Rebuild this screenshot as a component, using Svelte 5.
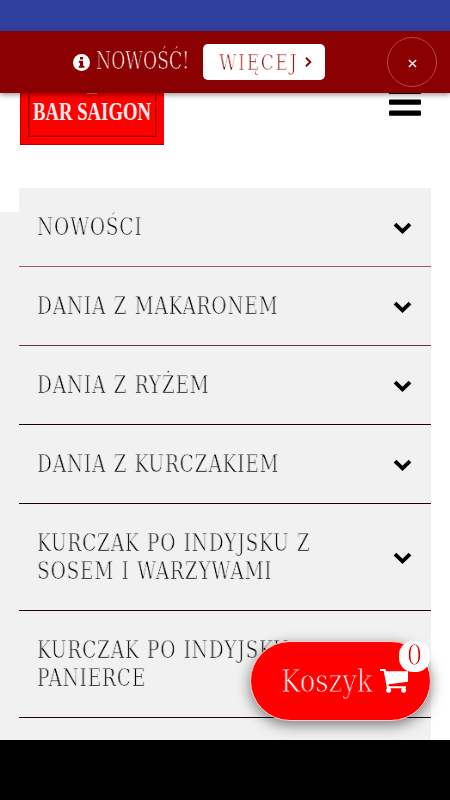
<script lang="ts">
  type Category = { lines: string[]; open: boolean }

  let categories: Category[] = [
    { lines: ['NOWOŚCI'], open: false },
    { lines: ['DANIA Z MAKARONEM'], open: false },
    { lines: ['DANIA Z RYŻEM'], open: false },
    { lines: ['DANIA Z KURCZAKIEM'], open: false },
    { lines: ['KURCZAK PO INDYJSKU Z', 'SOSEM I WARZYWAMI'], open: false },
    { lines: ['KURCZAK PO INDYJSKU', 'PANIERCE'], open: false },
    { lines: [''], open: false },
  ]

  let count = 0
</script>

<style>
  :global(body) {
    margin: 0;
    background: #000;
  }

  .screen {
    width: 450px;
    height: 800px;
    display: flex;
    flex-direction: column;
    overflow: hidden;
    background: #fff;
    font-family: 'DejaVu Serif Condensed', 'DejaVu Serif', serif;
    font-stretch: condensed;
  }

  button {
    margin: 0;
    padding: 0;
    border: 0;
    font: inherit;
    cursor: pointer;
  }

  svg {
    display: block;
    flex: none;
    overflow: visible;
  }

  .status {
    flex: none;
    height: 31px;
    background: #2f3f9e;
  }

  .banner {
    flex: none;
    height: 62px;
    box-sizing: border-box;
    padding: 0 13px 0 73px;
    display: flex;
    align-items: center;
    background: #8b0000;
    color: #fff;
    box-shadow: 0 2px 5px rgba(0, 0, 0, 0.4);
    position: relative;
    z-index: 2;
  }

  /* hairline lettering: a stroke in the background colour eats into the glyphs */
  .thin {
    display: block;
    white-space: nowrap;
    transform-origin: 0 50%;
    will-change: transform;
  }

  .news {
    width: 94px;
    margin: 0 13px 2px 6px;
    font-size: 24px;
    line-height: 30px;
    transform: scaleX(0.8);
    -webkit-text-stroke: 0.7px #8b0000;
  }

  .more {
    width: 122px;
    height: 36px;
    padding: 0 13px 0 16px;
    display: flex;
    align-items: center;
    justify-content: space-between;
    border-radius: 5px;
    background: #fff;
    color: #8b0000;
  }

  .more .thin {
    width: 80px;
    text-align: left;
    font-size: 22px;
    letter-spacing: 2px;
    transform: scaleX(0.86);
    -webkit-text-stroke: 0.7px #fff;
  }

  .close {
    width: 50px;
    height: 50px;
    margin-left: auto;
    box-sizing: border-box;
    display: flex;
    align-items: center;
    justify-content: center;
    border: 1px solid #b64848;
    border-radius: 50%;
    background: none;
  }

  .close svg {
    margin-top: 3px;
  }

  .page {
    flex: 1;
    min-height: 0;
    overflow: hidden;
    position: relative;
  }

  header {
    height: 95px;
    padding: 0 29px 0 20px;
    display: flex;
    justify-content: space-between;
    align-items: flex-start;
  }

  .toggle {
    padding: 0;
    background: none;
  }

  .menu {
    display: flex;
  }

  .gutter {
    flex: none;
    width: 19px;
    margin-top: 24px;
    background: #f1f1f1;
  }

  ul {
    width: 412px;
    margin: 0;
    padding: 0;
    list-style: none;
    background: #f1f1f1;
  }

  li {
    border-bottom: 1px solid #1c0006;
  }

  li:first-child {
    border-color: #a05a62;
  }

  li:nth-child(2) {
    border-color: #6f3039;
  }

  .category {
    width: 100%;
    min-height: 78px;
    padding: 25px 19px 25px 18px;
    box-sizing: border-box;
    display: flex;
    align-items: center;
    justify-content: space-between;
    background: none;
    color: #000;
    text-align: left;
  }

  .category .thin {
    font-size: 24px;
    line-height: 28px;
    letter-spacing: 0.9px;
    word-spacing: 0.8px;
    transform: scaleX(0.86);
    -webkit-text-stroke: 0.75px #f1f1f1;
  }

  .chevron {
    margin-top: 2px;
  }

  .cart {
    position: absolute;
    right: 19px;
    bottom: 19px;
    width: 181px;
    height: 80px;
    box-sizing: border-box;
    padding: 0 22px 0 30px;
    display: flex;
    align-items: center;
    justify-content: space-between;
    border: 1px solid #ffd0d0;
    border-radius: 40px;
    background: #f00;
    color: #fff;
    box-shadow: 0 4px 14px rgba(0, 0, 0, 0.5);
  }

  .cart .thin {
    width: 92px;
    text-align: left;
    font-size: 32px;
    transform: scaleX(0.9);
    -webkit-text-stroke: 0.9px #f00;
  }

  .badge {
    position: absolute;
    top: -1px;
    right: 0;
    width: 31px;
    height: 31px;
    border-radius: 14px;
    background: #fff;
    color: #d00000;
    font-size: 27px;
    line-height: 30px;
    text-align: center;
    -webkit-text-stroke: 0.7px #fff;
  }

  .nav {
    flex: none;
    height: 60px;
    background: #000;
  }
</style>

<div class="screen">
  <div class="status"></div>

  <div class="banner">
    <svg width="17" height="17" viewBox="0 0 17 17">
      <circle cx="8.5" cy="8.5" r="8.5" fill="#fff" />
      <path d="M7 3h3.1v2.5H7zM5.8 6.7h4.3v5.1h1.3v2H5.8v-2H7V8.7H5.8z" fill="#8b0000" />
    </svg>
    <span class="thin news">NOWOŚĆ!</span>
    <button class="more">
      <span class="thin">WIĘCEJ</span>
      <svg width="7" height="10" viewBox="0 0 7 10">
        <path d="M1 0.8 5.3 5 1 9.2" fill="none" stroke="#8b0000" stroke-width="1.9" />
      </svg>
    </button>
    <button class="close" aria-label="Zamknij">
      <svg width="9" height="9" viewBox="0 0 10 10">
        <path d="M1 1l8 8M9 1L1 9" stroke="#fff" stroke-width="1.5" />
      </svg>
    </button>
  </div>

  <div class="page">
    <header>
      <svg width="144" height="52" viewBox="0 0 144 52">
        <rect width="144" height="52" fill="#f00" />
        <path d="M0 51.5h144M.5 0v52" stroke="#b80000" fill="none" />
        <path d="M8.8 0v43.3h127V0" stroke="#8e0000" stroke-width="1.3" fill="none" />
        <path d="M67 0h10v1H67z" fill="#d77" />
        <text
          x="13"
          y="26.6"
          font-family="Liberation Serif, serif"
          font-weight="bold"
          font-size="26"
          fill="#ffecec"
          textLength="118"
          lengthAdjust="spacingAndGlyphs">BAR SAIGON</text
        >
      </svg>
      <button class="toggle" aria-label="Menu">
        <svg width="32" height="23" viewBox="0 0 32 23">
          <path d="M0 0h32v1H0z" />
          <rect y="6.5" width="32" height="5.3" rx="1" />
          <rect y="17.5" width="32" height="5.2" rx="1" />
        </svg>
      </button>
    </header>

    <div class="menu">
      <div class="gutter"></div>
      <ul>
        {#each categories as category}
          <li>
            <button class="category" on:click={() => (category.open = !category.open)}>
              <span>
                {#each category.lines as line}
                  <span class="thin">{line}</span>
                {/each}
              </span>
              <svg class="chevron" width="19" height="12" viewBox="0 0 19 12">
                <path d="M2 2.2 9.5 9.3 17 2.2" fill="none" stroke="#000" stroke-width="3.9" />
              </svg>
            </button>
          </li>
        {/each}
      </ul>
    </div>

    <button class="cart" on:click={() => (count += 1)}>
      <span class="thin">Koszyk</span>
      <svg width="28" height="24" viewBox="0 0 28 24">
        <path
          d="M0 0h5.3l.9 2.3H28v10.5L8.5 15.2l.5 2h17v2H7L3.7 2H0z"
          fill="#fff"
        />
        <circle cx="8.6" cy="21.3" r="2.5" fill="#fff" />
        <circle cx="23.6" cy="21.3" r="2.5" fill="#fff" />
      </svg>
      <span class="badge">{count}</span>
    </button>
  </div>

  <div class="nav"></div>
</div>
